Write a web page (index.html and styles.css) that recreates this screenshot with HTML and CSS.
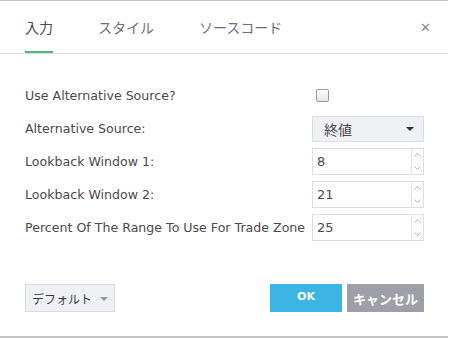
FILE: index.html
```html
<!DOCTYPE html>
<html lang="ja">
  <head>
    <meta charset="UTF-8" />
    <title>設定</title>
    <link rel="stylesheet" href="styles.css">
  </head>
  <body>
    <div id="dialog">
      <div id="tabs">
        <a class="tab active">入力</a>
        <a class="tab">スタイル</a>
        <a class="tab">ソースコード</a>
        <span class="close">&#x2715;</span>
      </div>
      <div id="content">
        <div class="row">
          <span class="label">Use Alternative Source?</span>
          <span class="field"><span class="checkbox"></span></span>
        </div>
        <div class="row">
          <span class="label">Alternative Source:</span>
          <span class="field"><span class="select">終値<span class="caret"></span></span></span>
        </div>
        <div class="row">
          <span class="label">Lookback Window 1:</span>
          <span class="field"><span class="number"><span class="value">8</span><span class="spin"><i><svg width="7" height="4" viewBox="0 0 7 4"><path d="M0.5 3.5L3.5 0.5L6.5 3.5"/></svg></i><i><svg width="7" height="4" viewBox="0 0 7 4"><path d="M0.5 0.5L3.5 3.5L6.5 0.5"/></svg></i></span></span></span>
        </div>
        <div class="row">
          <span class="label">Lookback Window 2:</span>
          <span class="field"><span class="number"><span class="value">21</span><span class="spin"><i><svg width="7" height="4" viewBox="0 0 7 4"><path d="M0.5 3.5L3.5 0.5L6.5 3.5"/></svg></i><i><svg width="7" height="4" viewBox="0 0 7 4"><path d="M0.5 0.5L3.5 3.5L6.5 0.5"/></svg></i></span></span></span>
        </div>
        <div class="row">
          <span class="label">Percent Of The Range To Use For Trade Zone</span>
          <span class="field"><span class="number"><span class="value">25</span><span class="spin"><i><svg width="7" height="4" viewBox="0 0 7 4"><path d="M0.5 3.5L3.5 0.5L6.5 3.5"/></svg></i><i><svg width="7" height="4" viewBox="0 0 7 4"><path d="M0.5 0.5L3.5 3.5L6.5 0.5"/></svg></i></span></span></span>
        </div>
      </div>
      <div id="footer">
        <a class="btn default">デフォルト<span class="caret gray"></span></a>
        <div class="right">
          <a class="btn ok">OK</a>
          <a class="btn cancel">キャンセル</a>
        </div>
      </div>
    </div>
  </body>
</html>
```

FILE: styles.css
```css
* {
  margin: 0;
  padding: 0;
  box-sizing: border-box;
}
body {
  background: #fff;
  font-family: "DejaVu Sans", "Noto Sans CJK JP", sans-serif;
  color: #4a4a4a;
}
#dialog {
  width: 448px;
  height: 338px;
  border-top: 1px solid #c4c4c4;
  border-bottom: 2px solid #c4c4c4;
  display: flex;
  flex-direction: column;
}
#tabs {
  height: 53px;
  border-bottom: 1px solid #e0e0e0;
  display: flex;
  align-items: flex-end;
  padding-left: 25px;
  position: relative;
}
.tab {
  font-family: "Noto Sans CJK JP", sans-serif;
  font-size: 14px;
  color: #6d7079;
  padding-bottom: 14px;
  margin-right: 45px;
  border-bottom: 2px solid transparent;
  line-height: 20px;
}
.tab.active {
  color: #4a4a4a;
  border-bottom-color: #4fb783;
}
.close {
  position: absolute;
  right: 17px;
  top: 19px;
  font-size: 13px;
  color: #8a8a8a;
  font-weight: bold;
}
#content {
  padding: 25px 24px 0 25px;
  flex: 1;
}
.row {
  height: 33px;
  display: flex;
  align-items: center;
  justify-content: space-between;
  font-size: 12.6px;
}
.field {
  width: 112px;
  display: flex;
  align-items: center;
}
.checkbox {
  width: 13px;
  height: 13px;
  margin-left: 4px;
  border: 1px solid #9a9a9a;
  border-radius: 2px;
  background: linear-gradient(#fdfdfd, #e6e6e6);
}
.select {
  width: 112px;
  height: 26px;
  background: #f0f1f5;
  border: 1px solid #dcdee3;
  font-family: "Noto Sans CJK JP", sans-serif;
  font-size: 14px;
  display: flex;
  align-items: center;
  justify-content: space-between;
  padding: 0 9px 0 11px;
}
.caret {
  width: 0;
  height: 0;
  border-left: 4px solid transparent;
  border-right: 4px solid transparent;
  border-top: 4px solid #333;
}
.caret.gray {
  border-top-color: #999;
  margin-left: 8px;
}
.number {
  width: 112px;
  height: 27px;
  border: 1px solid #dcdee3;
  display: flex;
}
.value {
  flex: 1;
  font-size: 13px;
  line-height: 25px;
  padding-left: 4px;
}
.spin {
  width: 12px;
  border-left: 1px solid #e4e5e8;
  display: flex;
  flex-direction: column;
}
.spin i {
  flex: 1;
  display: flex;
  align-items: center;
  justify-content: center;
}
.spin path {
  fill: none;
  stroke: #b4b7bc;
  stroke-width: 1;
}
#footer {
  height: 28px;
  padding: 0 24px 0 25px;
  display: flex;
  justify-content: space-between;
  margin-bottom: 24px;
}
.right {
  display: flex;
  gap: 5px;
}
.btn {
  height: 28px;
  display: flex;
  align-items: center;
  justify-content: center;
  font-family: "Noto Sans CJK JP", sans-serif;
  font-size: 12px;
}
.default {
  width: 90px;
  background: #f0f1f5;
  border: 1px solid #d8dbe0;
  color: #3a3a3a;
  padding-top: 1px;
}
.ok {
  width: 72px;
  background: #3cb4e4;
  color: #fff;
  font-weight: bold;
  font-family: "DejaVu Sans", sans-serif;
  font-size: 11px;
  padding-bottom: 3px;
}
.cancel {
  width: 77px;
  background: #9da0a7;
  color: #fff;
  font-weight: bold;
  font-size: 13px;
}
```
